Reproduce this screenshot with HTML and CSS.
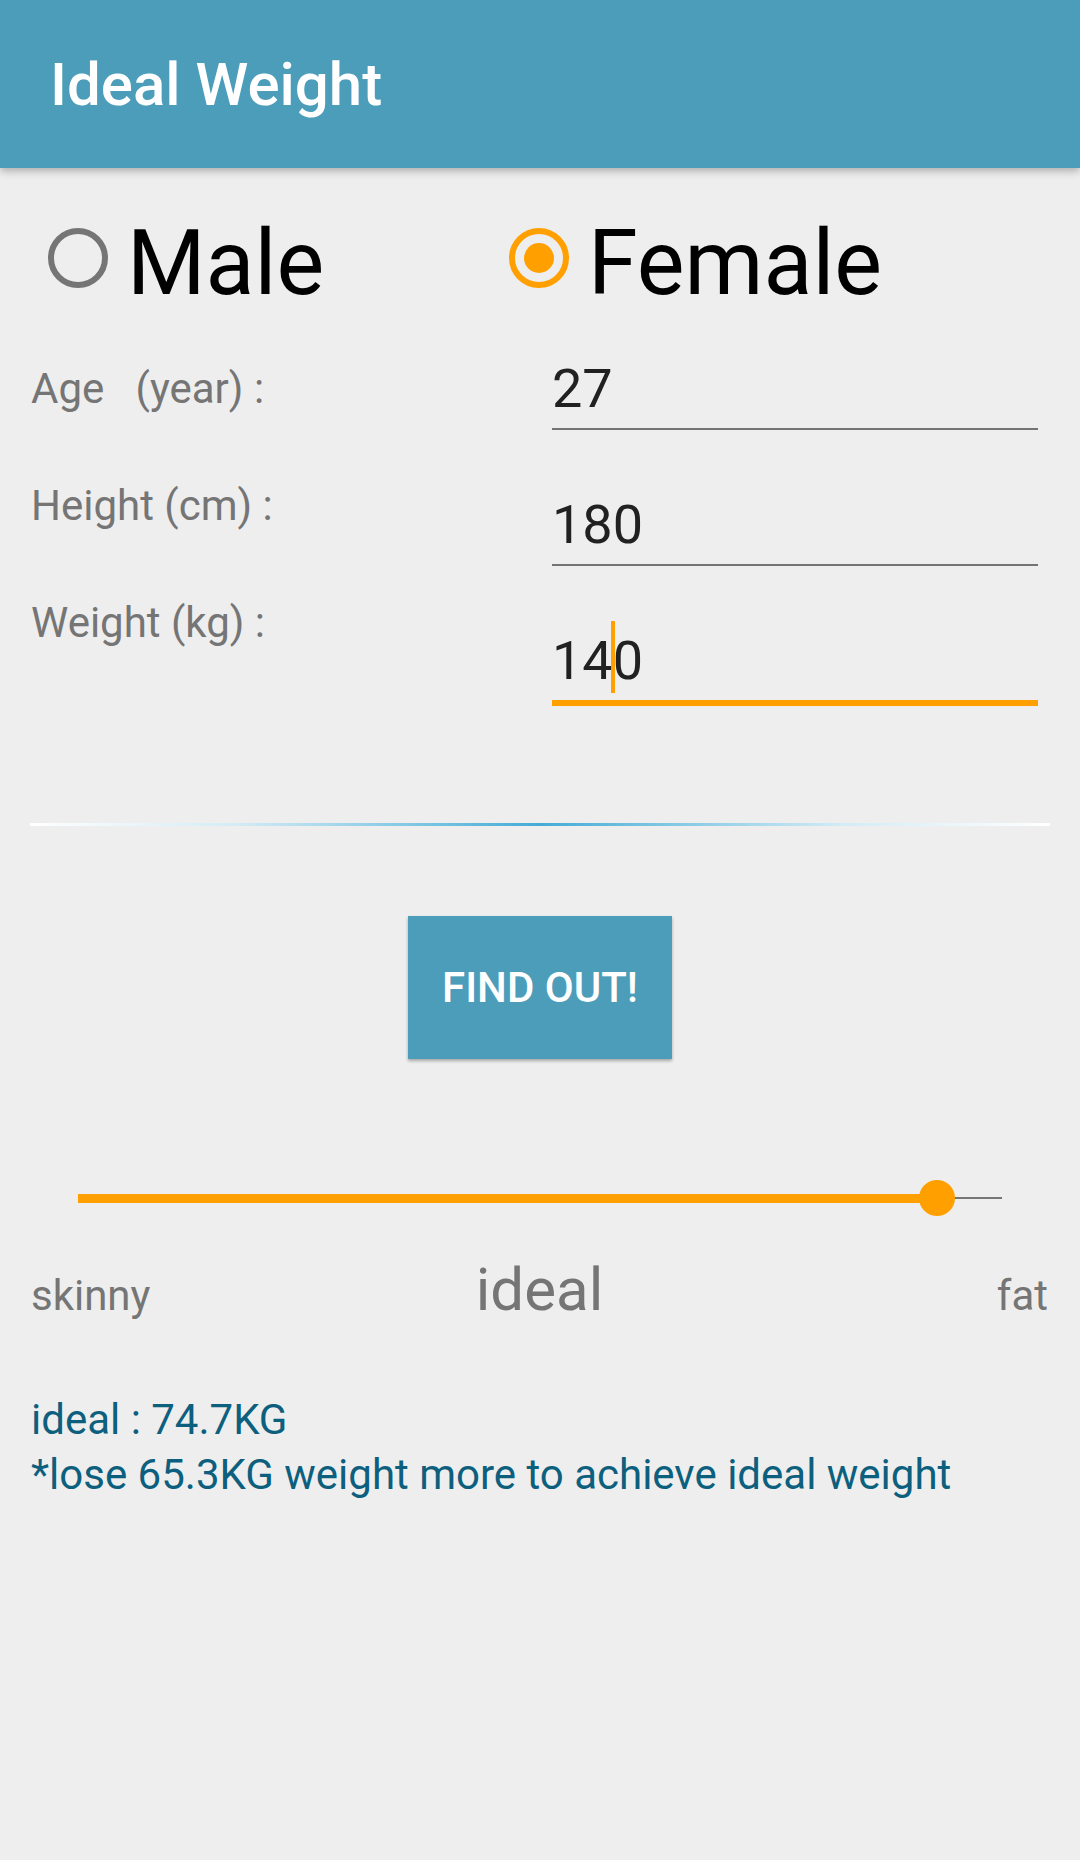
FILE: index.html
```html
<!DOCTYPE html>
<html lang="en">
<head>
    <meta charset="UTF-8">
    <meta name="viewport" content="width=device-width, initial-scale=1.0">
    <title>Ideal Weight</title>
    <link rel="stylesheet" href="styles.css">
</head>
<body>
    <header class="app-bar">
        <h1>Ideal Weight</h1>
    </header>

    <div class="gender">
        <div class="radio radio-male">
            <span class="radio-circle"></span>
            <span class="radio-label">Male</span>
        </div>
        <div class="radio radio-checked">
            <span class="radio-circle"><span class="radio-dot"></span></span>
            <span class="radio-label">Female</span>
        </div>
    </div>

    <div class="form">
        <div class="labels">
            <div class="label">Age&nbsp;&nbsp;&nbsp;(year) :</div>
            <div class="label">Height (cm) :</div>
            <div class="label">Weight (kg) :</div>
        </div>
        <div class="fields">
            <div class="field">27</div>
            <div class="field">180</div>
            <div class="field field-focused"><span class="value">14<span class="caret"></span>0</span></div>
        </div>
    </div>

    <div class="divider"></div>

    <div class="actions">
        <button class="btn-find">FIND OUT!</button>
    </div>

    <div class="slider">
        <div class="slider-progress" style="width: 93%"></div>
        <div class="slider-thumb"></div>
        <div class="slider-rest"></div>
    </div>

    <div class="scale">
        <span class="scale-side">skinny</span>
        <span class="scale-mid">ideal</span>
        <span class="scale-side scale-right">fat</span>
    </div>

    <div class="result">
        <div>ideal : 74.7KG</div>
        <div>*lose 65.3KG weight more to achieve ideal weight</div>
    </div>
</body>
</html>
```

FILE: styles.css
```css
body {
    font-family: Roboto, "Liberation Sans", sans-serif;
    margin: 0;
    background-color: #eeeeee;
    width: 1080px;
    height: 1860px;
    overflow: hidden;
}

.app-bar {
    height: 168px;
    background-color: #4c9dba;
    box-shadow: 0 3px 8px rgba(0,0,0,0.28);
    display: flex;
    align-items: center;
    padding-left: 50px;
    position: relative;
}

.app-bar h1 {
    margin: 0;
    color: #fff;
    font-size: 60px;
    font-weight: 500;
}

/* gender radios */
.gender {
    display: flex;
    align-items: center;
    height: 120px;
    margin-top: 30px;
    padding-left: 48px;
}

.radio {
    display: flex;
    align-items: center;
    gap: 19px;
}

.radio-male {
    width: 461px;
}

.radio-circle {
    width: 48px;
    height: 48px;
    border: 6px solid #757575;
    border-radius: 50%;
    display: flex;
    align-items: center;
    justify-content: center;
}

.radio-checked .radio-circle {
    border-color: #ffa000;
}

.radio-dot {
    width: 30px;
    height: 30px;
    border-radius: 50%;
    background-color: #ffa000;
}

.radio-label {
    font-size: 90px;
    color: #000;
    line-height: 106px;
    padding-top: 12px;
}

/* form */
.form {
    display: flex;
}

.labels {
    width: 521px;
    padding-left: 31px;
    padding-top: 46px;
}

.label {
    height: 117px;
    font-size: 42px;
    line-height: 50px;
    color: #757575;
}

.fields {
    width: 486px;
    padding-top: 39px;
}

.field {
    font-size: 54px;
    line-height: 64px;
    color: #212121;
    padding-bottom: 7px;
    border-bottom: 2px solid #737373;
    margin-bottom: 63px;
}

.field-focused {
    border-bottom: 6px solid #ffa000;
    margin-bottom: 0;
}

.value {
    position: relative;
}

.caret {
    position: absolute;
    left: 59px;
    top: -8px;
    width: 4px;
    height: 72px;
    background-color: #ffa000;
}

.divider {
    height: 3px;
    margin: 108px 30px 0;
    background: linear-gradient(to right, #ffffff, #d4ecf6 20%, #45acd6 50%, #d4ecf6 80%, #ffffff);
}

.actions {
    display: flex;
    justify-content: center;
    margin-top: 90px;
}

.btn-find {
    width: 264px;
    height: 143px;
    border: none;
    border-radius: 0;
    background-color: #4c9dba;
    color: #fff;
    font-family: Roboto, "Liberation Sans", sans-serif;
    font-size: 42px;
    font-weight: 500;
    box-shadow: 0 2px 3px rgba(0,0,0,0.3);
    padding: 0;
}

/* seek bar */
.slider {
    display: flex;
    align-items: center;
    height: 40px;
    margin: 119px 78px 0;
}

.slider-progress {
    height: 9px;
    background-color: #ffa000;
}

.slider-thumb {
    width: 36px;
    height: 36px;
    border-radius: 50%;
    background-color: #ffa000;
    margin: 0 -18px;
    position: relative;
}

.slider-rest {
    flex: 1;
    height: 2px;
    background-color: #757575;
}

.scale {
    display: flex;
    align-items: baseline;
    padding: 0 32px 0 31px;
    margin-top: 37px;
    color: #757575;
    line-height: 70px;
}

.scale-side {
    flex: 1 1 0;
    font-size: 42px;
}

.scale-right {
    text-align: right;
}

.scale-mid {
    font-size: 60px;
}

.result {
    margin-top: 61px;
    padding-left: 31px;
    font-size: 42px;
    line-height: 55px;
    color: #0d5f7e;
}
```
